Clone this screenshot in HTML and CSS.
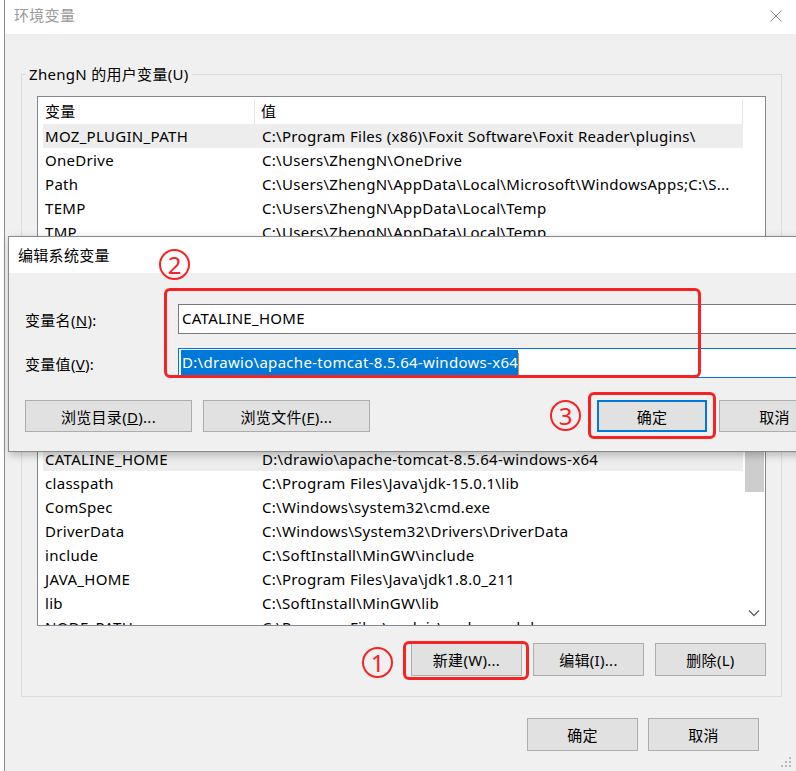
FILE: index.html
```html
<!DOCTYPE html>
<html lang="zh-CN">
<head>
    <meta charset="UTF-8">
    <title>环境变量</title>
    <link rel="stylesheet" href="styles.css">
</head>
<body>
    <div class="window">
        <div class="titlebar">
            <span class="title">环境变量</span>
            <svg class="close" width="12" height="12" viewBox="0 0 12 12">
                <path d="M0.5 0.5 L11.5 11.5 M11.5 0.5 L0.5 11.5" stroke="#888" stroke-width="1"/>
            </svg>
        </div>
        <div class="content">
            <fieldset class="group">
                <legend>ZhengN 的用户变量(U)</legend>
                <div class="listbox">
                    <div class="list-head">
                        <div class="head-name">变量</div>
                        <div class="head-value">值</div>
                    </div>
                    <div class="list-body">
                        <div class="rows">
                            <div class="row selected"><span class="name">MOZ_PLUGIN_PATH</span><span class="value">C:\Program Files (x86)\Foxit Software\Foxit Reader\plugins\</span></div>
                            <div class="row"><span class="name">OneDrive</span><span class="value">C:\Users\ZhengN\OneDrive</span></div>
                            <div class="row"><span class="name">Path</span><span class="value">C:\Users\ZhengN\AppData\Local\Microsoft\WindowsApps;C:\S...</span></div>
                            <div class="row"><span class="name">TEMP</span><span class="value">C:\Users\ZhengN\AppData\Local\Temp</span></div>
                            <div class="row"><span class="name">TMP</span><span class="value">C:\Users\ZhengN\AppData\Local\Temp</span></div>
                            <div class="list-gap"></div>
                            <div class="row selected"><span class="name">CATALINE_HOME</span><span class="value">D:\drawio\apache-tomcat-8.5.64-windows-x64</span></div>
                            <div class="row"><span class="name">classpath</span><span class="value">C:\Program Files\Java\jdk-15.0.1\lib</span></div>
                            <div class="row"><span class="name">ComSpec</span><span class="value">C:\Windows\system32\cmd.exe</span></div>
                            <div class="row"><span class="name">DriverData</span><span class="value">C:\Windows\System32\Drivers\DriverData</span></div>
                            <div class="row"><span class="name">include</span><span class="value">C:\SoftInstall\MinGW\include</span></div>
                            <div class="row"><span class="name">JAVA_HOME</span><span class="value">C:\Program Files\Java\jdk1.8.0_211</span></div>
                            <div class="row"><span class="name">lib</span><span class="value">C:\SoftInstall\MinGW\lib</span></div>
                            <div class="row"><span class="name">NODE_PATH</span><span class="value">C:\Program Files\nodejs\node_modules</span></div>
                        </div>
                        <div class="scrollbar">
                            <div class="thumb"></div>
                            <svg class="arrow" width="12" height="8" viewBox="0 0 12 8">
                                <path d="M1 1.5 L6 6.5 L11 1.5" fill="none" stroke="#606060" stroke-width="1.3"/>
                            </svg>
                        </div>
                    </div>
                </div>
                <div class="group-buttons">
                    <button class="btn">新建(W)...</button>
                    <button class="btn">编辑(I)...</button>
                    <button class="btn">删除(L)</button>
                </div>
            </fieldset>
            <div class="footer">
                <button class="btn">确定</button>
                <button class="btn">取消</button>
            </div>
        </div>
        <svg class="grip" width="12" height="12" viewBox="0 0 12 12" fill="#b8b8b8">
            <rect x="8" y="0" width="2" height="2"/>
            <rect x="4" y="4" width="2" height="2"/><rect x="8" y="4" width="2" height="2"/>
            <rect x="0" y="8" width="2" height="2"/><rect x="4" y="8" width="2" height="2"/><rect x="8" y="8" width="2" height="2"/>
        </svg>
    </div>

    <div class="dialog">
        <div class="dialog-title">编辑系统变量</div>
        <div class="dialog-body">
            <div class="field-row">
                <span class="label">变量名(<u>N</u>):</span>
                <div class="field">CATALINE_HOME</div>
            </div>
            <div class="field-row">
                <span class="label">变量值(<u>V</u>):</span>
                <div class="field focused"><span class="selection">D:\drawio\apache-tomcat-8.5.64-windows-x64</span><span class="caret"></span></div>
            </div>
            <div class="dialog-buttons">
                <button class="btn btn-wide">浏览目录(<u>D</u>)...</button>
                <button class="btn btn-wide">浏览文件(<u>F</u>)...</button>
                <span class="spacer"></span>
                <button class="btn btn-default">确定</button>
                <button class="btn">取消</button>
            </div>
        </div>
    </div>

    <!-- annotations -->
    <div class="mark-box box-2"></div>
    <div class="mark-box box-3"></div>
    <div class="mark-box box-1"></div>
    <span class="mark-num num-1">1</span>
    <span class="mark-num num-2">2</span>
    <span class="mark-num num-3">3</span>
</body>
</html>
```

FILE: styles.css
```css
body {
    margin: 0;
    width: 796px;
    height: 771px;
    overflow: hidden;
    position: relative;
    background: #fff;
    font-family: "Noto Sans", "Noto Sans CJK SC", sans-serif;
    font-size: 15px;
    letter-spacing: 0.3px;
    color: #000;
}
.window {
    margin-left: 4px;
    height: 771px;
    border-left: 1px solid #8c8c8c;
    background: #f0f0f0;
    position: relative;
}
.titlebar {
    height: 34px;
    background: #fff;
    display: flex;
    align-items: center;
    justify-content: space-between;
    padding: 0 14px 5px 9px;
    box-sizing: border-box;
}
.title {
    color: #9a9a9a;
}
.close {
    margin-top: 3px;
}
.content {
    padding: 30px 14px 0 16px;
}
.group {
    margin: 0;
    padding: 12px 15px 20px 15px;
    border: 1px solid #dcdcdc;
    min-width: 0;
}
.group legend {
    margin-left: -11px;
    padding: 0 3px;
    line-height: 20px;
}
.listbox {
    height: 530px;
    box-sizing: border-box;
    border: 1px solid #828790;
    background: #fff;
    overflow: hidden;
}
.list-head {
    display: flex;
    height: 27px;
    line-height: 25px;
    padding-top: 2px;
    box-sizing: border-box;
}
.head-name {
    width: 217px;
    padding-left: 7px;
    box-sizing: border-box;
    border-right: 1px solid #e5e5e5;
}
.head-value {
    width: 488px;
    padding-left: 6px;
    box-sizing: border-box;
    border-right: 1px solid #e5e5e5;
}
.list-body {
    display: flex;
    height: 501px;
    overflow: hidden;
}
.rows {
    width: 705px;
    padding-left: 5px;
    box-sizing: border-box;
}
.row {
    display: flex;
    height: 24px;
    line-height: 25px;
    white-space: nowrap;
}
.row.selected {
    background: #ededed;
}
.name {
    width: 219px;
    padding-left: 2px;
    box-sizing: border-box;
}
.list-gap {
    height: 203px;
}
.scrollbar {
    width: 22px;
    display: flex;
    flex-direction: column;
    align-items: center;
}
.thumb {
    width: 19px;
    height: 45px;
    margin-top: 323px;
    margin-left: 1px;
    background: #cdcdcd;
}
.arrow {
    margin-top: auto;
    margin-bottom: 8px;
}
.group-buttons {
    display: flex;
    justify-content: flex-end;
    gap: 11px;
    margin-top: 17px;
}
.btn {
    width: 111px;
    height: 33px;
    margin: 0;
    padding: 0;
    background: #e1e1e1;
    border: 1px solid #adadad;
    font-family: inherit;
    font-size: 15px;
    letter-spacing: 0.3px;
    color: #000;
}
.footer {
    display: flex;
    justify-content: flex-end;
    gap: 10px;
    margin-top: 21px;
    margin-right: 23px;
}
.grip {
    position: absolute;
    right: 3px;
    bottom: 2px;
}

/* edit dialog */
.dialog {
    position: absolute;
    left: 8px;
    top: 236px;
    width: 837px;
    border: 1px solid #8a8a8a;
    background: #f0f0f0;
    box-shadow: 2px 3px 8px rgba(0, 0, 0, 0.25);
}
.dialog-title {
    height: 36px;
    line-height: 37px;
    padding-left: 9px;
    background: #fff;
}
.dialog-body {
    padding: 31px 16px 19px 16px;
}
.field-row {
    display: flex;
    align-items: center;
    margin-bottom: 14px;
}
.label {
    width: 153px;
}
.field {
    flex: 1;
    height: 30px;
    line-height: 26px;
    box-sizing: border-box;
    border: 1px solid #7a7a7a;
    background: #fff;
    padding-left: 3px;
    white-space: nowrap;
}
.field.focused {
    border-color: #0078d7;
    padding-left: 2px;
    line-height: 27px;
}
.selection {
    background: #0078d7;
    color: #fff;
    padding: 2px 0 3px 1px;
}
.caret {
    display: inline-block;
    width: 1px;
    height: 22px;
    vertical-align: middle;
    background: #e08a3a;
}
.dialog-buttons {
    display: flex;
    gap: 11px;
    margin-top: 22px;
}
.btn-wide {
    width: 167px;
    height: 32px;
}
.spacer {
    flex: 1;
}
.dialog-buttons .btn {
    height: 32px;
}
.btn-default {
    width: 110px;
    border: 2px solid #0078d7;
    margin-right: 1px;
}

/* red annotations */
.mark-box {
    position: absolute;
    border: 3px solid #f52323;
    border-radius: 6px;
    box-sizing: border-box;
}
.box-2 { left: 164px; top: 288px; width: 537px; height: 90px; }
.box-3 { left: 588px; top: 392px; width: 128px; height: 47px; }
.box-1 { left: 403px; top: 641px; width: 126px; height: 39px; }
.mark-num {
    position: absolute;
    width: 31px;
    height: 31px;
    box-sizing: border-box;
    border: 2px solid #f52323;
    border-radius: 50%;
    color: #f52323;
    font-size: 24px;
    line-height: 27px;
    text-align: center;
    letter-spacing: 0;
}
.num-1 { left: 362px; top: 647px; }
.num-2 { left: 159px; top: 249px; }
.num-3 { left: 550px; top: 400px; }
```
